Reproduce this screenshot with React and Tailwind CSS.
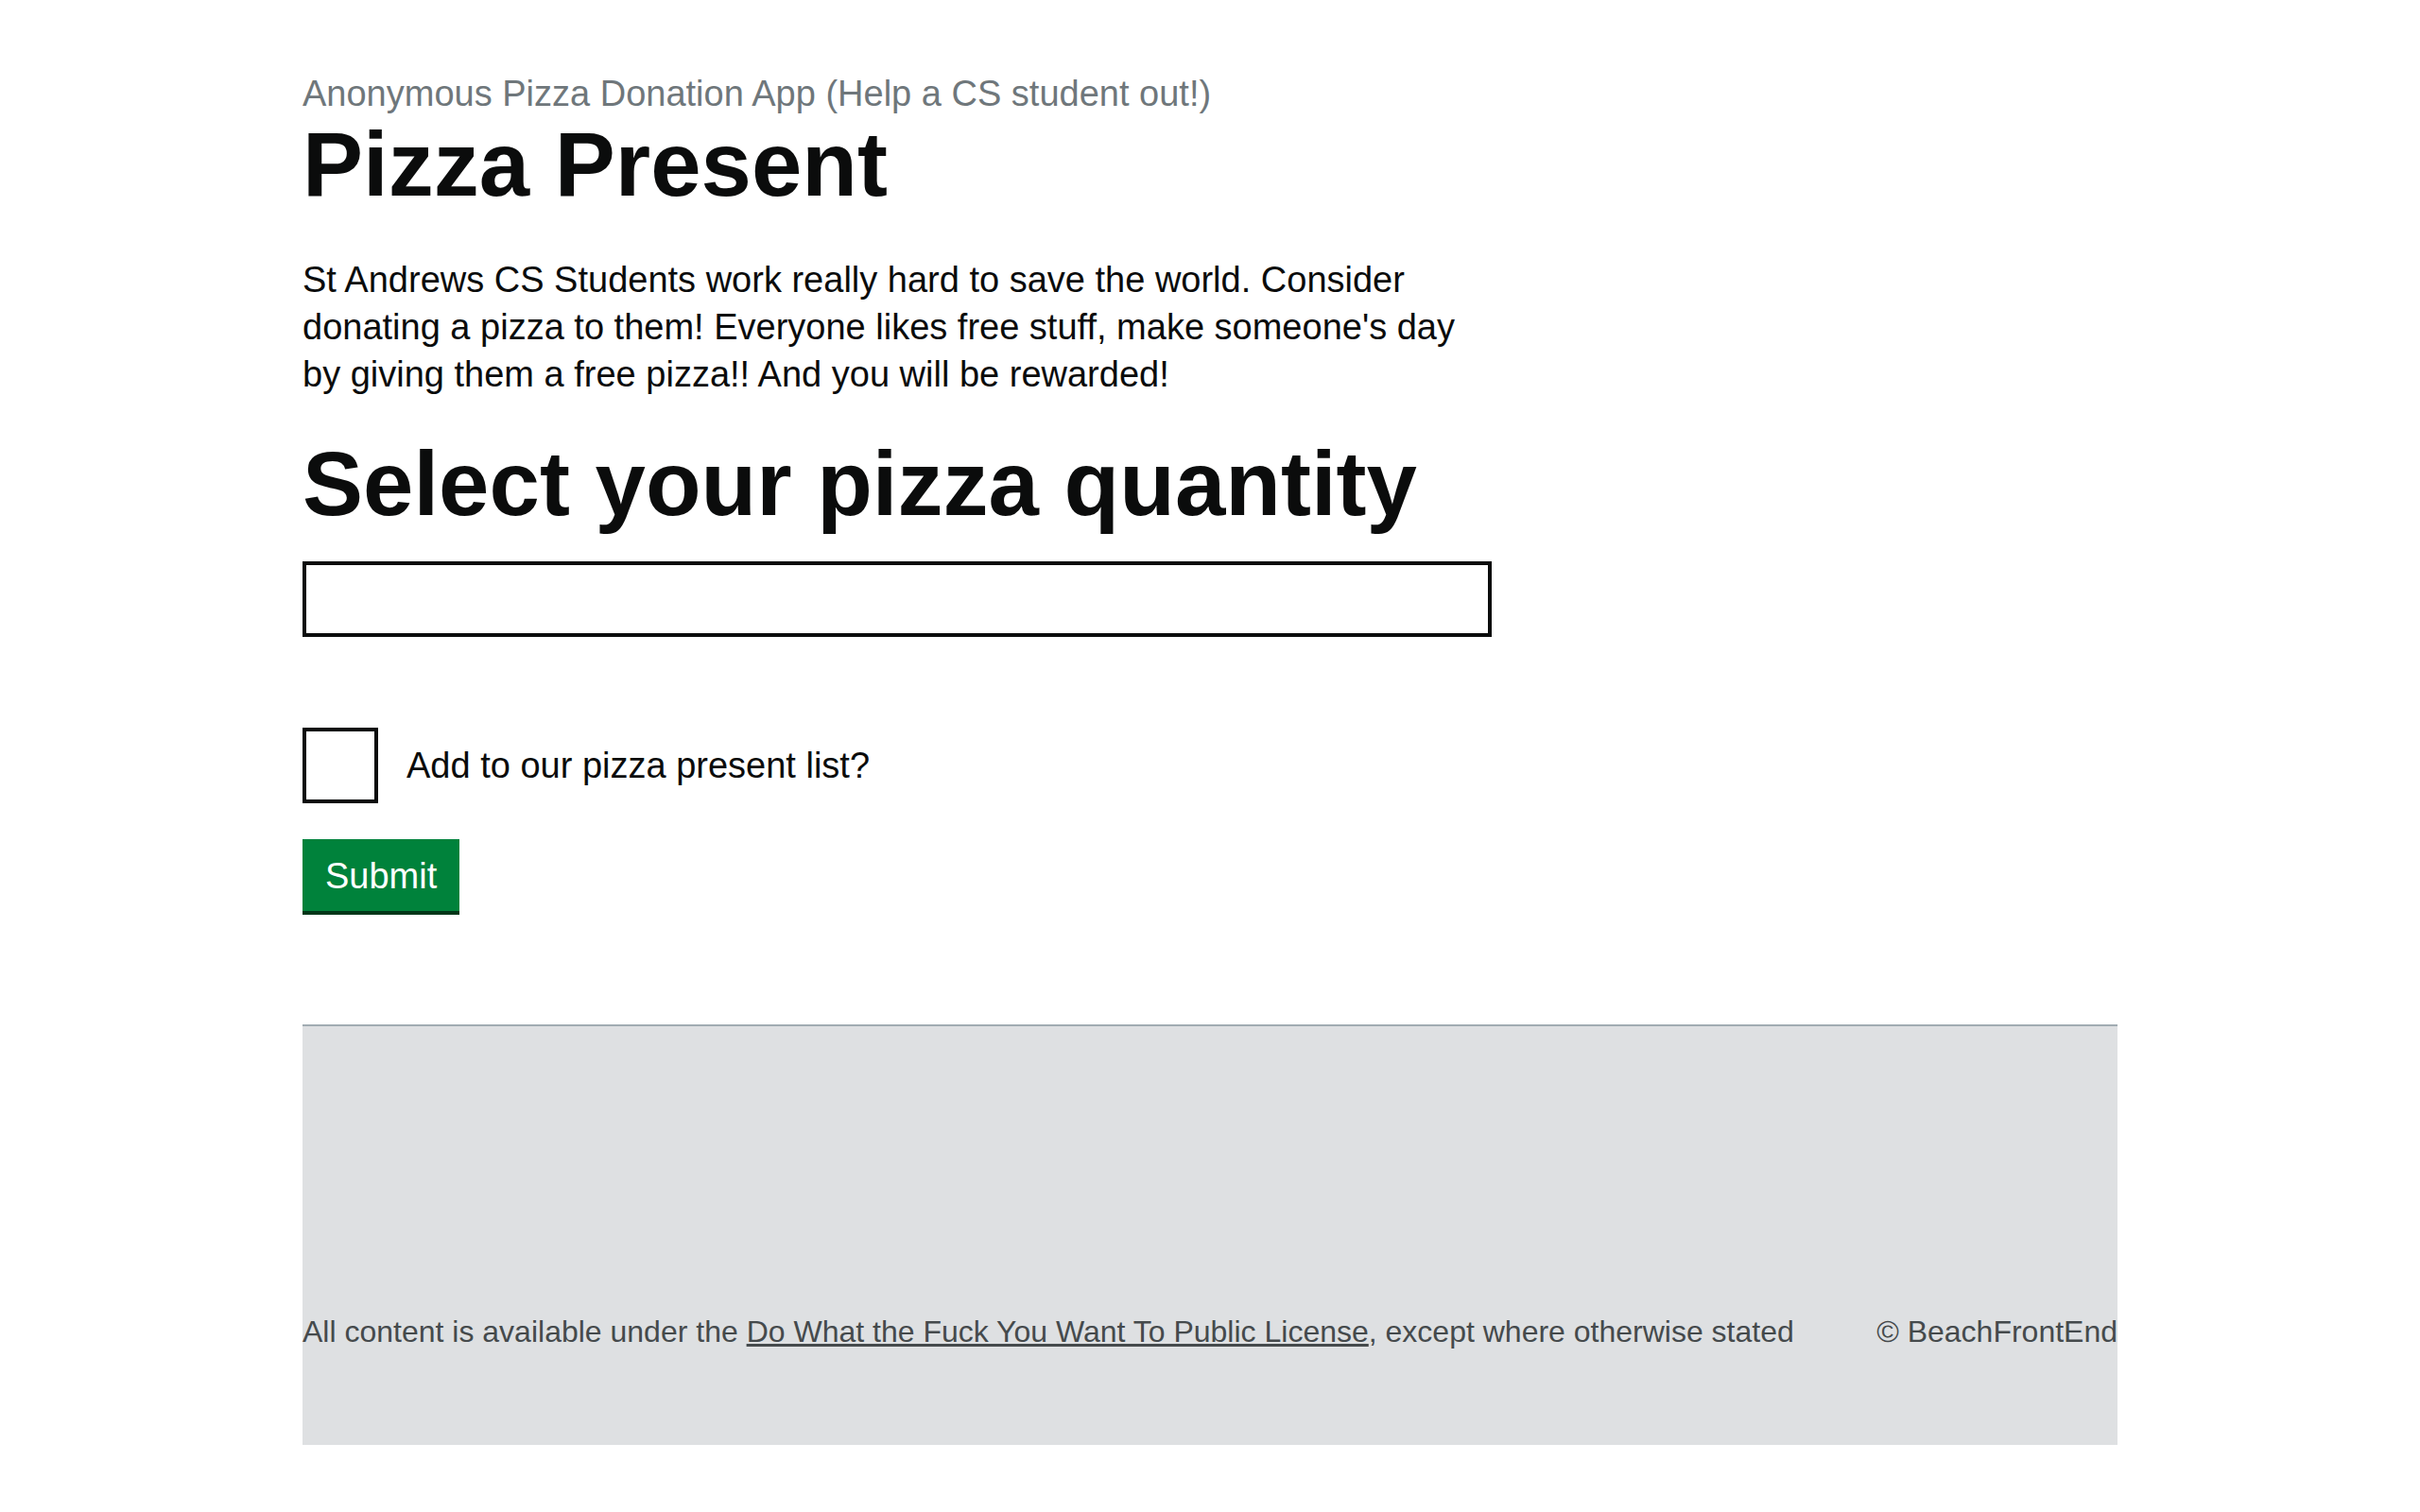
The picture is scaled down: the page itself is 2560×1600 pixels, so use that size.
export default function App() {
  return (
    <div className="min-h-[1600px] w-full bg-white font-['Liberation_Sans',Arial,sans-serif] text-[#0b0c0c]">
      <div className="mx-auto w-[1920px]">
        <main className="pt-[75px]">
          <span className="block text-[38px] leading-[49px] text-[#6f777b]">
            Anonymous Pizza Donation App (Help a CS student out!)
          </span>
          <h1 className="text-[96px] font-bold leading-[100px] mb-[47px]">Pizza Present</h1>
          <p className="w-[1258px] text-[38px] leading-[50px] mb-[41px]">
            St Andrews CS Students work really hard to save the world. Consider donating a pizza to them! Everyone likes free stuff, make someone's day by giving them a free pizza!! And you will be rewarded!
          </p>
          <h1 className="text-[96px] font-bold leading-[100px] mb-[32px]">
            <label htmlFor="qty">Select your pizza quantity</label>
          </h1>
          <input
            id="qty"
            type="text"
            className="block h-[80px] w-[1258px] border-[4px] border-[#0b0c0c] bg-white px-[10px] text-[38px] outline-none"
          />
          <div className="mt-[96px] flex items-center">
            <span className="block h-[80px] w-[80px] shrink-0 border-[4px] border-[#0b0c0c] bg-white" />
            <span className="ml-[30px] text-[38px] leading-[50px]">Add to our pizza present list?</span>
          </div>
          <button
            type="button"
            className="mt-[38px] block h-[76px] border-[4px] border-transparent bg-[#00823b] px-[20px] pt-[16px] pb-[14px] text-[38px] leading-[38px] text-white shadow-[0_4px_0_#003618]"
          >
            Submit
          </button>
        </main>
        <footer className="mt-[120px] border-t-[2px] border-[#a1acb2] bg-[#dee0e2] pt-[303px] pb-[100px] text-[32px] leading-[40px] text-[#454a4c]">
          <div className="flex items-end justify-between">
            <span>
              All content is available under the{" "}
              <a href="#" className="underline text-[#454a4c]">Do What the Fuck You Want To Public License</a>
              , except where otherwise stated
            </span>
            <span className="whitespace-nowrap">© BeachFrontEnd</span>
          </div>
        </footer>
      </div>
    </div>
  );
}
